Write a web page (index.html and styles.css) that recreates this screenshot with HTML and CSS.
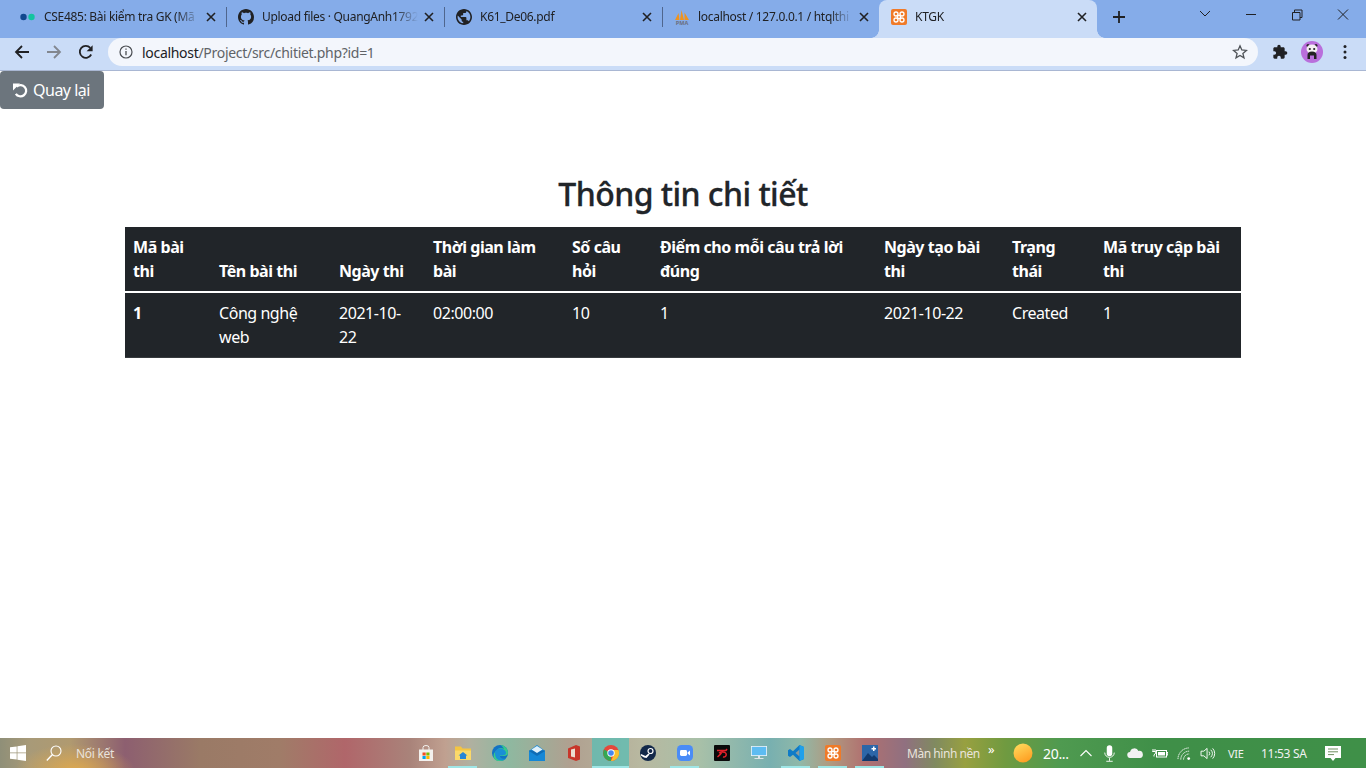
FILE: index.html
```html
<!DOCTYPE html>
<html lang="vi">
<head>
<meta charset="utf-8">
<title>KTGK</title>
<link rel="stylesheet" href="styles.css">
</head>
<body>
<svg class="defs" width="0" height="0" aria-hidden="true">
  <symbol id="xampp" viewBox="0 0 16 16">
    <rect width="16" height="16" rx="2" fill="#f07a28"/>
    <g fill="none" stroke="#fff" stroke-width="1.300">
      <circle cx="5" cy="5" r="2"/><circle cx="11" cy="5" r="2"/><circle cx="5" cy="11" r="2"/><circle cx="11" cy="11" r="2"/>
      <path d="M6.500 6.500h3v3h-3z"/>
    </g>
  </symbol>
  <symbol id="close" viewBox="0 0 10 10">
    <path d="M1 1l8 8M9 1l-8 8" fill="none" stroke="#202124" stroke-width="1.600"/>
  </symbol>
</svg>
<div class="window">
  <div class="tabstrip">
    <div class="tab">
      <svg class="favicon" viewBox="0 0 16 16"><circle cx="3.500" cy="8" r="3.200" fill="#12488f"/><circle cx="11.500" cy="8" r="3.200" fill="#12c4a0"/></svg>
      <span class="tab-title">CSE485: Bài kiểm tra GK (Mã</span>
      <svg class="tab-close"><use href="#close"/></svg>
    </div>
    <div class="tab">
      <svg class="favicon" viewBox="0 0 16 16"><path fill="#202124" d="M8 0C3.580 0 0 3.580 0 8c0 3.540 2.290 6.530 5.470 7.590.4.070.55-.17.55-.38 0-.19-.01-.82-.01-1.490-2.010.37-2.530-.49-2.690-.94-.09-.23-.48-.94-.82-1.130-.28-.15-.68-.52-.01-.53.63-.01 1.080.58 1.230.82.72 1.210 1.870.87 2.330.66.070-.52.28-.87.51-1.070-1.780-.2-3.640-.89-3.640-3.950 0-.87.31-1.590.82-2.150-.08-.2-.36-1.020.08-2.120 0 0 .67-.21 2.200.82.64-.18 1.320-.27 2-.27.68 0 1.360.09 2 .27 1.530-1.040 2.200-.82 2.200-.82.44 1.100.16 1.920.08 2.120.51.56.82 1.270.82 2.150 0 3.070-1.870 3.750-3.650 3.950.29.25.54.73.54 1.480 0 1.070-.01 1.930-.01 2.200 0 .21.15.46.55.38A8.013 8.013 0 0016 8c0-4.420-3.580-8-8-8z"/></svg>
      <span class="tab-title">Upload files · QuangAnh1792</span>
      <svg class="tab-close"><use href="#close"/></svg>
    </div>
    <div class="tab">
      <svg class="favicon" viewBox="2 2 20 20"><path fill="#202124" d="M12 2C6.480 2 2 6.480 2 12s4.480 10 10 10 10-4.480 10-10S17.520 2 12 2zm-1 17.930c-3.950-.49-7-3.850-7-7.930 0-.62.08-1.210.21-1.790L9 15v1c0 1.100.9 2 2 2v1.930zm6.900-2.540c-.26-.81-1-1.390-1.900-1.390h-1v-3c0-.55-.45-1-1-1H8v-2h2c.55 0 1-.45 1-1V7h2c1.100 0 2-.9 2-2v-.41c2.930 1.190 5 4.060 5 7.410 0 2.080-.8 3.970-2.100 5.390z"/></svg>
      <span class="tab-title">K61_De06.pdf</span>
      <svg class="tab-close"><use href="#close"/></svg>
    </div>
    <div class="tab tab-last">
      <svg class="favicon" viewBox="0 0 16 16"><path d="M1 11L4.500 4l1 7zM6 11l1.500-10L10 11zM10.500 11L10.500 3.500 15 11z" fill="#f0931e"/><text x="8" y="15.500" class="pma">PMA</text></svg>
      <span class="tab-title">localhost / 127.0.0.1 / htqlthi</span>
      <svg class="tab-close"><use href="#close"/></svg>
    </div>
    <div class="tab tab-active">
      <svg class="favicon"><use href="#xampp"/></svg>
      <span class="tab-title">KTGK</span>
      <svg class="tab-close"><use href="#close"/></svg>
    </div>
    <svg class="new-tab" viewBox="0 0 12 12"><path d="M6 0v12M0 6h12" fill="none" stroke="#202124" stroke-width="1.800"/></svg>
    <div class="win-controls">
      <svg class="win-btn" viewBox="0 0 46 30"><path d="M18 11l5 5 5-5" fill="none" stroke="#202124"/></svg>
      <svg class="win-btn" viewBox="0 0 46 30"><path d="M18 14.500h10" fill="none" stroke="#202124"/></svg>
      <svg class="win-btn" viewBox="0 0 46 30"><path d="M18.500 12.500h7.500v7.500h-7.500zM20.500 12.500v-2.500h7.500v7.500h-2" fill="none" stroke="#202124"/></svg>
      <svg class="win-btn" viewBox="0 0 46 30"><path d="M18 9.500l10 10M28 9.500l-10 10" fill="none" stroke="#202124"/></svg>
    </div>
  </div>
  <div class="toolbar">
    <svg class="nav-icon" viewBox="0 0 16 16"><path d="M15 8H2M8 2L2 8l6 6" fill="none" stroke="#202124" stroke-width="1.800"/></svg>
    <svg class="nav-icon" viewBox="0 0 16 16"><path d="M1 8h13M8 2l6 6-6 6" fill="none" stroke="#82878f" stroke-width="1.800"/></svg>
    <svg class="nav-icon" viewBox="0 0 16 16"><path d="M13.200 10.500A6 6 0 1 1 12.300 3.800" fill="none" stroke="#202124" stroke-width="1.800"/><path d="M14.600 1.200v6h-6z" fill="#202124"/></svg>
    <div class="omnibox">
      <svg class="info" viewBox="0 0 14 14"><circle cx="7" cy="7" r="6" fill="none" stroke="#4a4d52" stroke-width="1.200"/><path d="M7 6v4.200M7 3.500v1.300" stroke="#4a4d52" stroke-width="1.300"/></svg>
      <span class="url"><span class="url-host">localhost</span>/Project/src/chitiet.php?id=1</span>
      <svg class="star" viewBox="0 0 16 16"><path d="M8 1.800l1.800 4.200 4.600.4-3.500 3 1.100 4.500L8 11.500 4 13.900l1.100-4.500-3.500-3 4.600-.4z" fill="none" stroke="#4f5358" stroke-width="1.300"/></svg>
    </div>
    <svg class="ext" viewBox="0 0 24 24"><path fill="#202124" d="M20.500 11H19V7c0-1.100-.9-2-2-2h-4V3.500a2.500 2.500 0 0 0-5 0V5H4c-1.100 0-2 .9-2 2v3.800h1.500a2.700 2.700 0 0 1 0 5.400H2V20c0 1.100.9 2 2 2h3.800v-1.500a2.700 2.700 0 0 1 5.400 0V22H17c1.100 0 2-.9 2-2v-4h1.500a2.500 2.500 0 0 0 0-5z"/></svg>
    <svg class="avatar" viewBox="0 0 22 22"><circle cx="11" cy="11" r="11" fill="#b96fdc"/><circle cx="7" cy="4.500" r="1.500" fill="#222"/><circle cx="15" cy="4.500" r="1.500" fill="#222"/><ellipse cx="11" cy="8" rx="5.500" ry="4.500" fill="#f4f0f2"/><circle cx="8.800" cy="8" r="1.100" fill="#222"/><circle cx="13.200" cy="8" r="1.100" fill="#222"/><path d="M6.500 18v-4a4.500 3.500 0 0 1 9 0v4h-2.500v-3.500h-4V18z" fill="#222"/></svg>
    <svg class="dots" viewBox="0 0 4 16"><circle cx="2" cy="2.500" r="1.500" fill="#202124"/><circle cx="2" cy="8" r="1.500" fill="#202124"/><circle cx="2" cy="13.500" r="1.500" fill="#202124"/></svg>
  </div>
  <main class="page">
    <a class="back-btn" href="#">
      <svg class="undo" viewBox="0 0 16 16"><path d="M4 3.800A6 6 0 1 1 3 11.500" fill="none" stroke="#fff" stroke-width="2.400"/><path d="M0 .5h7.500L0 8z" fill="#fff"/></svg>
      Quay lại
    </a>
    <section class="container">
      <h2 class="title">Thông tin chi tiết</h2>
      <table class="data">
        <colgroup>
          <col class="c1"><col class="c2"><col class="c3"><col class="c4"><col class="c5"><col class="c6"><col class="c7"><col class="c8"><col class="c9">
        </colgroup>
        <thead>
          <tr>
            <th>Mã bài thi</th>
            <th>Tên bài thi</th>
            <th>Ngày thi</th>
            <th>Thời gian làm bài</th>
            <th>Số câu hỏi</th>
            <th>Điểm cho mỗi câu trả lời đúng</th>
            <th>Ngày tạo bài thi</th>
            <th>Trạng thái</th>
            <th>Mã truy cập bài thi</th>
          </tr>
        </thead>
        <tbody>
          <tr>
            <th>1</th>
            <td>Công nghệ web</td>
            <td>2021-10-22</td>
            <td>02:00:00</td>
            <td>10</td>
            <td>1</td>
            <td>2021-10-22</td>
            <td>Created</td>
            <td>1</td>
          </tr>
        </tbody>
      </table>
    </section>
  </main>
  <footer class="taskbar">
    <svg class="start" viewBox="0 0 16 16"><path fill="#fff" d="M0 2.300l6.700-.9v6.200H0zM7.400 1.300L16 0v7.600H7.400zM0 8.300h6.700v6.300L0 13.700zM7.400 8.300H16V16l-8.600-1.200z"/></svg>
    <svg class="search" viewBox="0 0 16 16"><circle cx="10" cy="6" r="5" fill="none" stroke="#fff" stroke-width="1.100"/><path d="M6.500 9.500L.8 15.500" stroke="#fff" stroke-width="1.400"/></svg>
    <span class="search-text">Nối kết</span>
    <div class="apps">
      <span class="app"><svg viewBox="0 0 16 16"><path d="M1 4.500h14V16H1z" fill="#f3f1ee"/><path d="M5 5V2.500a3 2 0 0 1 6 0V5" fill="none" stroke="#f3f1ee"/><path d="M4.500 7.500h3.200v3H4.500z" fill="#f25022"/><path d="M8.300 7.500h3.200v3H8.300z" fill="#7fba00"/><path d="M4.500 11h3.200v3H4.500z" fill="#00a4ef"/><path d="M8.300 11h3.200v3H8.300z" fill="#ffb900"/></svg></span>
      <span class="app running"><svg viewBox="0 0 16 16"><path d="M0 1.500h6l1.500 2H16V15H0z" fill="#f4c542"/><path d="M0 5.500h16V15H0z" fill="#fbd96a"/><path d="M8 7l4.500 3.500h-1.500V14H5v-3.500H3.500z" fill="#2a86d6"/></svg></span>
      <span class="app"><svg viewBox="0 0 16 16"><circle cx="8" cy="8" r="8" fill="#1273c4"/><path d="M8 0a8 8 0 0 1 8 8c0 2-2 3-4 3H6c1 3 5 4 8 2.500A8 8 0 0 1 3 14.500C0 11 2 6 6 5c2.500-.5 5 0 5 2H4C5 3 9 2 12 4 11 2 9 0 8 0z" fill="#37c98b"/><path d="M3 8c0-3 3-5 6-4.500s5 2.500 5 4.500c0 2-3 2.500-6 2.500-.5 2 2 4 6 3-2 2.500-7 2.500-9.500 0C3.500 12 3 10 3 8z" fill="#1a8fd6"/></svg></span>
      <span class="app"><svg viewBox="0 0 16 16"><path d="M0 6L8 0l8 6v10H0z" fill="#1487d6"/><path d="M0 6l8 5 8-5v-.5H0z" fill="#0f6cb5"/><path d="M2.500 4.500L8 1l5.500 3.500L8 8z" fill="#dff1fb"/></svg></span>
      <span class="app"><svg viewBox="0 0 16 16"><path d="M2 3.500L10 0l4 1.500v13L10 16l-8-3z" fill="#c8352a"/><path d="M5 4.500l4-1v9l-4-1z" fill="#ecdcd0"/></svg></span>
      <span class="app active"><svg viewBox="0 0 16 16"><circle cx="8" cy="8" r="8" fill="#e5473a"/><path d="M8 8L1 4.500A8 8 0 0 0 8 16z" fill="#35a853"/><path d="M8 5h7.500A8 8 0 0 1 8 16l3-7z" fill="#fbc02d"/><circle cx="8" cy="8" r="3.700" fill="#fff"/><circle cx="8" cy="8" r="2.800" fill="#4787f0"/></svg></span>
      <span class="app"><svg viewBox="0 0 16 16"><circle cx="8" cy="8" r="8" fill="#13294a"/><circle cx="10.500" cy="6" r="2.500" fill="none" stroke="#fff" stroke-width="1.200"/><path d="M1 9l4.500 2 3-2.500 1 1L6.500 13 4 12.500 .8 10.500z" fill="#fff"/></svg></span>
      <span class="app running"><svg viewBox="0 0 16 16"><rect width="16" height="16" rx="4.500" fill="#4a8cf7"/><rect x="3" y="5" width="7" height="6" rx="1.400" fill="#fff"/><path d="M10.500 7.500l2.500-2v5l-2.500-2z" fill="#fff"/></svg></span>
      <span class="app"><svg viewBox="0 0 16 16"><rect width="16" height="16" rx="1" fill="#0a0a0a"/><path d="M3 5.500h9l1-1.500M5 8c2-1.500 6-1.500 7 .5s-1 4-3 3.500M9 5.500C7.500 8 6 10 3.500 12" fill="none" stroke="#e3202a" stroke-width="1.500"/></svg></span>
      <span class="app"><svg viewBox="0 0 16 16"><path d="M0 1h16v10H0z" fill="#eef3f6"/><path d="M.8 1.800h14.400v8.400H.8z" fill="#5dbcf2"/><path d="M7 11h2v2H7zM3.500 13h9v1h-9z" fill="#dfe5e8"/></svg></span>
      <span class="app running"><svg viewBox="0 0 16 16"><path d="M11.500 0L16 2v12l-4.500 2L5 9.800 2 12 0 10.800V5.200L2 4l3 2.200z" fill="#0f7bc7"/><path d="M11.500 4.500L7.500 8l4 3.500z" fill="#8a9a9e"/><path d="M11.500 0L16 2v12l-4.500 2z" fill="#1fa0ea"/></svg></span>
      <span class="app running"><svg viewBox="0 0 16 16"><use href="#xampp"/></svg></span>
      <span class="app running"><svg viewBox="0 0 16 16"><path d="M0 0h16v16H0z" fill="#2c66a8"/><path d="M0 16l6-8 4 4 2-2 4 4v2z" fill="#123a6e"/><path d="M11 1.500h1.500V3H14v1.500h-1.500V6H11V4.500H9.500V3H11z" fill="#fff"/></svg></span>
    </div>
    <span class="tray-label">Màn hình nền</span>
    <span class="chev">»</span>
    <svg class="sun" viewBox="0 0 20 20"><defs><linearGradient id="sun" x1="0.300" y1="0" x2="0.800" y2="1"><stop offset="0" stop-color="#ffd75a"/><stop offset="1" stop-color="#ff9a1e"/></linearGradient></defs><circle cx="10" cy="10" r="9.500" fill="url(#sun)"/></svg>
    <span class="temp">20...</span>
    <svg class="caret" viewBox="0 0 12 8"><path d="M.5 7l5.500-5.500L11.500 7" fill="none" stroke="#fff" stroke-width="1.100"/></svg>
    <svg class="mic" viewBox="0 0 12 18"><rect x="3" y="0" width="6" height="12" rx="3" fill="#fff"/><path d="M.8 8a5.200 5.200 0 0 0 10.400 0M6 14v3M2.500 17.500h7" fill="none" stroke="#fff"/></svg>
    <svg class="cloud" viewBox="0 0 16 10"><path d="M3.500 10a3 3 0 0 1-.5-6 4.500 4.500 0 0 1 8.500-1A3.500 3.500 0 0 1 13 10z" fill="#f2f2f2"/></svg>
    <svg class="batt" viewBox="0 0 16 11"><rect x="4.500" y="2.500" width="10" height="6.500" fill="none" stroke="#fff"/><rect x="6" y="4" width="7" height="3.500" fill="#fff"/><path d="M15 4.500h1v2.500h-1zM1 1v2.500M3 1v2.500M.3 3.500h3.400v1.500L2 7v1.500" fill="none" stroke="#fff"/></svg>
    <svg class="wifi" viewBox="0 0 16 14"><path d="M1 13A12 12 0 0 1 13 1M4 13.500a9 9 0 0 1 9-9M7 13.500a6 6 0 0 1 6-6" fill="none" stroke="#fff" stroke-dasharray="1.500 .6"/><circle cx="12.500" cy="12.500" r="1.500" fill="#fff"/></svg>
    <svg class="speaker" viewBox="0 0 16 14"><path d="M.5 4.500h3L7 1.500v11l-3.500-3h-3z" fill="none" stroke="#fff"/><path d="M9 5a3 3 0 0 1 0 4M11 3a6 6 0 0 1 0 8M13 1.500a8 8 0 0 1 0 11" fill="none" stroke="#fff"/></svg>
    <span class="lang">VIE</span>
    <span class="clock">11:53 SA</span>
    <svg class="notif" viewBox="0 0 16 15"><path d="M0 0h16v12h-5.500L8 15l-2.500-3H0z" fill="#fff"/><path d="M3 3h10M3 5.800h10M3 8.600h6" stroke="#6f8f60"/></svg>
  </footer>
</div>
</body>
</html>
```
FILE: styles.css
```css
* { box-sizing: border-box; }

html, body {
  margin: 0;
  height: 100%;
  overflow: hidden;
}

body {
  font-family: "Noto Sans", "Open Sans", sans-serif;
  color: #212529;
  background: #fff;
}

.defs { position: absolute; }

.window {
  display: flex;
  flex-direction: column;
  height: 768px;
}

/* tab strip */
.tabstrip {
  display: flex;
  align-items: center;
  flex: none;
  height: 38px;
  padding-left: 8px;
  background: #85ace9;
}

.tab {
  position: relative;
  display: flex;
  align-items: center;
  flex: none;
  width: 218px;
  height: 34px;
  margin-bottom: 4px;
  padding: 0 9px 0 12px;
}

.tab::after {
  content: "";
  position: absolute;
  right: -1px;
  top: 7px;
  width: 1px;
  height: 20px;
  background: #4f668e;
}

.tab-last::after { display: none; }

.tab-last { width: 217px; }

.tab-active {
  height: 38px;
  margin-bottom: 0;
  align-self: flex-end;
  background: #cadcf7;
  border-radius: 8px 8px 0 0;
  padding-bottom: 4px;
}

.tab-active::before,
.tab-active::after {
  content: "";
  position: absolute;
  top: auto;
  bottom: 0;
  width: 8px;
  height: 8px;
}

.tab-active::before {
  left: -8px;
  background: radial-gradient(circle at 0 0, transparent 7.500px, #cadcf7 8px);
}

.tab-active::after {
  right: -8px;
  background: radial-gradient(circle at 100% 0, transparent 7.500px, #cadcf7 8px);
}

.favicon {
  flex: none;
  width: 16px;
  height: 16px;
  margin-right: 8px;
}

.pma {
  font-size: 5.500px;
  font-weight: 700;
  text-anchor: middle;
  fill: #6b6f80;
}

.tab-title {
  flex: 1;
  min-width: 0;
  overflow: hidden;
  white-space: nowrap;
  font-size: 12px;
  letter-spacing: -0.3px;
  line-height: 16px;
  color: #202124;
  -webkit-mask-image: linear-gradient(to left, transparent 0, #000 24px);
  mask-image: linear-gradient(to left, transparent 0, #000 24px);
}

.tab-close {
  flex: none;
  width: 10px;
  height: 10px;
  margin-left: 6px;
  margin-right: 1px;
}

.new-tab {
  flex: none;
  width: 12px;
  height: 12px;
  margin: 0 0 4px 16px;
}

.win-controls {
  display: flex;
  margin-left: auto;
  align-self: flex-start;
}

.win-btn {
  display: block;
  width: 46px;
  height: 30px;
}

/* toolbar */
.toolbar {
  display: flex;
  align-items: center;
  flex: none;
  height: 33px;
  padding: 0 0 4px 14px;
  background: #cadcf7;
  border-bottom: 1px solid #a9b7d3;
}

.nav-icon {
  flex: none;
  width: 16px;
  height: 16px;
  margin-right: 16px;
}

.nav-icon:nth-child(3) { margin-right: 14px; }

.omnibox {
  display: flex;
  align-items: center;
  flex: none;
  width: 1150px;
  height: 28px;
  padding: 0 10px 0 11px;
  border-radius: 14px;
  background: #f3f6fc;
}

.info {
  flex: none;
  width: 14px;
  height: 14px;
  margin-right: 9px;
}

.url {
  flex: 1;
  font-size: 14px;
  letter-spacing: -0.3px;
  color: #5f6368;
  white-space: nowrap;
}

.url-host { color: #202124; }

.star {
  flex: none;
  width: 16px;
  height: 16px;
}

.ext {
  flex: none;
  width: 16px;
  height: 16px;
  margin-left: 14px;
}

.avatar {
  flex: none;
  width: 22px;
  height: 22px;
  margin-left: 13px;
}

.dots {
  flex: none;
  width: 4px;
  height: 16px;
  margin-left: 20px;
}

/* page */
.page {
  flex: 1;
  min-height: 0;
}

.back-btn {
  display: inline-flex;
  align-items: center;
  gap: 5px;
  width: 104px;
  height: 38px;
  padding: 0 12px 0 13px;
  border-radius: 4px;
  background: #6c757d;
  color: #fff;
  font-size: 16px;
  letter-spacing: -0.5px;
  text-decoration: none;
  white-space: nowrap;
  vertical-align: top;
}

.undo {
  flex: none;
  width: 15px;
  height: 15px;
}

.container {
  width: 1116px;
  margin: 72px auto 0;
}

.title {
  margin: 0 0 20px;
  font-size: 32px;
  font-weight: 500;
  line-height: 26.400px;
  letter-spacing: -0.55px;
  text-align: center;
  color: #212529;
  -webkit-text-stroke: 0.3px #212529;
}

.data {
  width: 1116px;
  table-layout: fixed;
  border-collapse: collapse;
  background: #212529;
  color: #fff;
  font-size: 16px;
  line-height: 24px;
  letter-spacing: -0.45px;
}

.c1 { width: 86px; }
.c2 { width: 120px; }
.c3 { width: 94px; }
.c4 { width: 139px; }
.c5 { width: 88px; }
.c6 { width: 224px; }
.c7 { width: 128px; }
.c8 { width: 91px; }
.c9 { width: 146px; }

.data th, .data td {
  padding: 8px;
  text-align: left;
  font-weight: 400;
}

.data th { font-weight: 700; }

.data thead th { vertical-align: bottom; }

.data tbody th, .data tbody td {
  vertical-align: top;
  border-top: 2px solid #fff;
  border-bottom: 1px solid #373b3e;
}

/* taskbar */
.taskbar {
  position: relative;
  display: flex;
  align-items: center;
  flex: none;
  height: 30px;
  color: #fff;
  background:
    radial-gradient(ellipse 60px 26px at 75px 32px, #dca850 0, rgba(220,168,80,0) 100%),
    linear-gradient(to right, #8f8f78 0, #a89a78 30px, #b09a70 70px, #8d5f70 125px, #9a7a66 200px, #a07c68 280px, #b0666a 345px, #a9837a 410px, #c0a090 445px, #b0b0a0 470px, #8fb8a0 510px, #b0a090 570px, #b8b8a0 640px, #a8c0a8 700px, #78b0b0 770px, #90b8a8 800px, #b09a80 830px, #b07070 865px, #907080 905px, #808a60 935px, #98a040 965px, #709a40 1005px, #4f9a50 1060px, #3f8f48 1160px, #3f9048 1366px);
}

.start { flex: none; width: 16px; height: 16px; margin-left: 10px; }
.search { flex: none; width: 16px; height: 16px; margin-left: 20px; }

.search-text {
  flex: none;
  width: 40px;
  margin-left: 14px;
  font-size: 12px;
  letter-spacing: -0.3px;
  color: #e9e2dc;
  white-space: nowrap;
}

.apps {
  display: flex;
  flex: none;
  margin-left: 291px;
  height: 30px;
}

.app {
  position: relative;
  display: flex;
  align-items: center;
  justify-content: center;
  flex: none;
  width: 37px;
  height: 30px;
}

.app svg { width: 16px; height: 16px; display: block; }

.app.active { background: rgba(90, 190, 180, 0.75); }

.app.running::after, .app.active::after {
  content: "";
  position: absolute;
  left: 4px;
  right: 4px;
  bottom: 0;
  height: 2px;
  background: #9fe6e6;
}

.app.active::after { left: 0; right: 0; }

.tray-label {
  flex: none;
  width: 74px;
  margin-left: 19px;
  font-size: 12px;
  letter-spacing: -0.45px;
  color: #e9e4dc;
  white-space: nowrap;
}

.chev {
  flex: none;
  margin: -8px 0 0 7px;
  width: 10px;
  font-size: 13px;
  line-height: 1;
}

.sun { flex: none; width: 20px; height: 20px; margin-left: 15px; }

.temp {
  flex: none;
  width: 26px;
  margin-left: 10px;
  font-size: 14px;
  letter-spacing: -0.3px;
  white-space: nowrap;
}

.caret { flex: none; width: 12px; height: 8px; margin-left: 11px; }
.mic { flex: none; width: 11px; height: 17px; margin-left: 12px; }
.cloud { flex: none; width: 16px; height: 10px; margin-left: 12px; }
.batt { flex: none; width: 16px; height: 11px; margin-left: 9px; }
.wifi { flex: none; width: 15px; height: 13px; margin-left: 9px; }
.speaker { flex: none; width: 16px; height: 13px; margin-left: 8px; }

.lang {
  flex: none;
  margin-left: 12px;
  width: 22px;
  font-size: 11px;
  letter-spacing: -0.3px;
  color: #f2f2f2;
}

.clock {
  flex: none;
  width: 47px;
  margin-left: 11px;
  font-size: 12px;
  letter-spacing: -0.3px;
  color: #f2f2f2;
  white-space: nowrap;
}

.notif { flex: none; width: 16px; height: 15px; margin-left: 17px; }
```
